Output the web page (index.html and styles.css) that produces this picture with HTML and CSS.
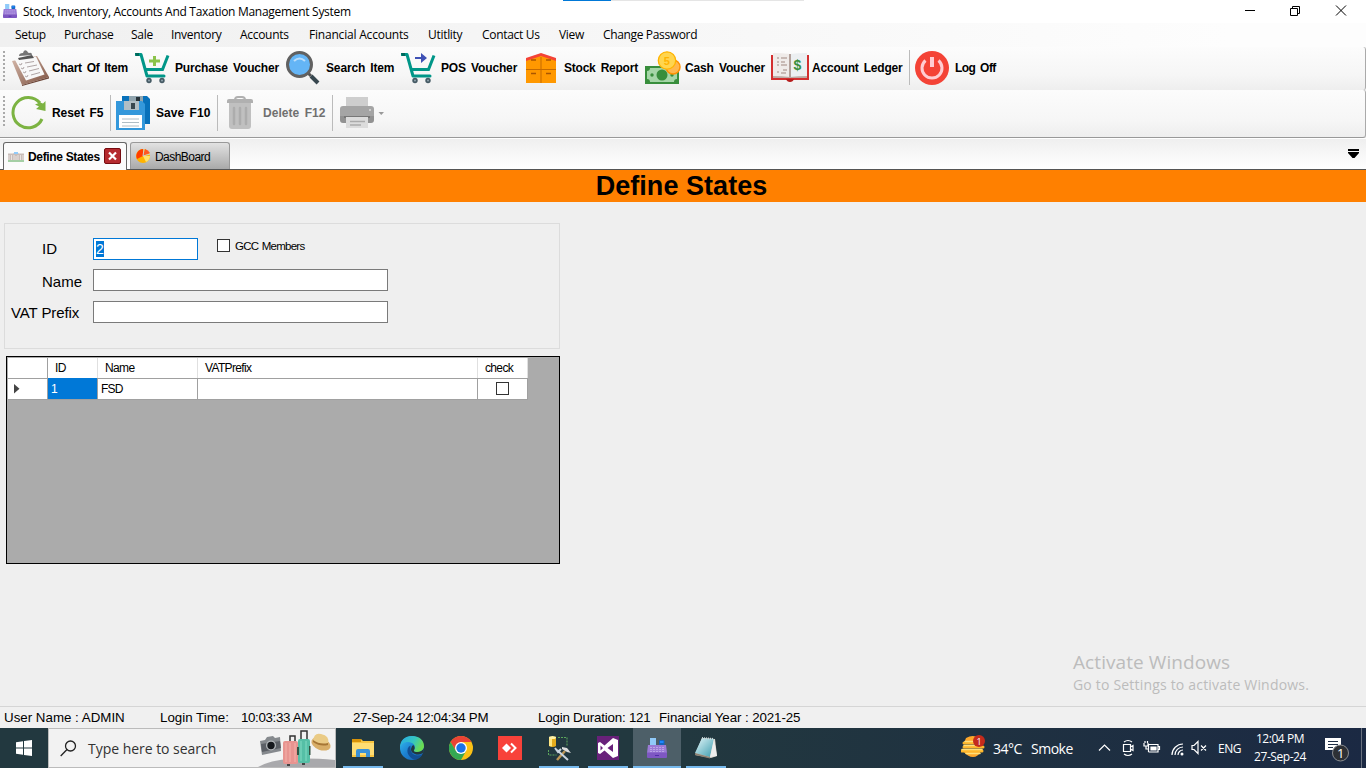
FILE: index.html
```html
<!DOCTYPE html>
<html lang="en">
<head>
<meta charset="utf-8">
<title>Stock, Inventory, Accounts And Taxation Management System</title>
<link rel="stylesheet" href="styles.css">
</head>
<body>
<svg class="defs" width="0" height="0">
  <defs>
    <linearGradient id="edgeBlue" x1="0" y1="0" x2="1" y2="1"><stop offset="0" stop-color="#35c1f1"/><stop offset=".5" stop-color="#1c7fd0"/><stop offset="1" stop-color="#1660b0"/></linearGradient>
    <linearGradient id="edgeGreen" x1="0" y1="0" x2="1" y2=".4"><stop offset="0" stop-color="#27a9e8"/><stop offset=".6" stop-color="#36c6c0"/><stop offset="1" stop-color="#6bdc52"/></linearGradient>
    <linearGradient id="wood" x1="0" y1="0" x2="1" y2="1"><stop offset="0" stop-color="#d8bcae"/><stop offset="1" stop-color="#7d5140"/></linearGradient>
    <linearGradient id="glass" x1="0" y1="0" x2="1" y2="1"><stop offset="0" stop-color="#e4f7fa"/><stop offset="1" stop-color="#3c9cae"/></linearGradient>
    <symbol id="register" viewBox="0 0 20 20">
      <rect x="3" y="0" width="6" height="8" fill="#90caf9"/><rect x="12" y="2" width="5.500" height="5" rx="1" fill="#1565c0"/><path d="M13 3h3.500v2H13z" fill="#1e88ff"/>
      <path d="M1 7h18l1 8H0z" fill="#9b7bd6"/><path d="M0 14.500h20V19q0 1-1 1H1q-1 0-1-1z" fill="#7e57c2"/>
      <path d="M3 9.500h14M3 11.500h14M3 13.500h14" stroke="#c3aeea" stroke-width=".800" stroke-dasharray="2 1"/><path d="M8 17.500h4" stroke="#512da8"/>
    </symbol>
    <symbol id="cart" viewBox="0 0 36 34">
      <path d="M1 3.500h5L12 25h17" fill="none" stroke="#009688" stroke-width="3" stroke-linecap="round" stroke-linejoin="round"/>
      <path d="M9 18.500h18.500L33 4.500" fill="none" stroke="#009688" stroke-width="3"/><path d="M0 2h4v3H1z" fill="#00695c"/>
      <circle cx="14" cy="29.500" r="2.700" fill="#455a64"/><circle cx="27" cy="29.500" r="2.700" fill="#455a64"/><circle cx="14" cy="29.500" r="1" fill="#90a4ae"/><circle cx="27" cy="29.500" r="1" fill="#90a4ae"/>
    </symbol>
  </defs>
</svg>
<div class="window">
  <header class="titlebar">
    <svg class="app-icon" viewBox="0 0 20 20"><use href="#register"/></svg>
    <span class="title-text">Stock, Inventory, Accounts And Taxation Management System</span>
    <div class="loading"></div>
    <svg class="win-controls" viewBox="0 0 104 12" fill="none" stroke="#000"><path d="M0 5.500h10"/><path d="M45.500 3.500h7v7h-7zM47.500 3.500v-2h7v7h-2"/><path d="M91 .500l10 10M101 .500l-10 10"/></svg>
  </header>
  <nav class="menu">
    <span class="m-setup">Setup</span><span class="m-purchase">Purchase</span><span class="m-sale">Sale</span><span class="m-inventory">Inventory</span><span class="m-accounts">Accounts</span><span class="m-financial">Financial Accounts</span><span class="m-utility">Utitlity</span><span class="m-contact">Contact Us</span><span class="m-view">View</span><span class="m-password">Change Password</span>
  </nav>
  <div class="toolbar primary">
    <i class="grip"></i>
    <div class="tool t-chart">
      <svg width="37" height="36" viewBox="0 0 37 36"><path d="M0 11 25 6l12 21-27 8z" fill="url(#wood)"/><path d="M10 35l27-8v1.500L10 36z" fill="#6d4638"/><path d="M3 10 24 6.500l8.500 18L14 30.500z" fill="#f8f8f8"/><path d="M7 6q0-3 4-3 1-4 4-2 1 2 2 2 3-1 3 2z" fill="#757575"/><path d="M6 8l14-3 2 3-15 2z" fill="#555"/><path d="M7 14l2 1 1-2M13 13l9-1.500M9 18l2 1 1-2M15 17l10-2M11 22l2 1 1-2M17 21l10-2.500M13 26l2 1 1-2M19 25l9-2.500" fill="none" stroke="#b0a6a6"/></svg>
      <span>Chart Of Item</span>
    </div>
    <div class="tool t-purchase"><svg width="36" height="34"><use href="#cart"/><path d="M18 5h3v3.500h4v3h-4V15h-3v-3.500h-4v-3h4z" fill="#8bc34a"/></svg><span>Purchase Voucher</span></div>
    <div class="tool t-search"><svg width="34" height="34" viewBox="0 0 34 34"><path d="M22 22l3 3" stroke="#555" stroke-width="3"/><path d="M25 25l7 7" stroke="#37474f" stroke-width="4"/><circle cx="13.500" cy="13.500" r="12" fill="#64b5f6" stroke="#616161" stroke-width="3"/><path d="M8 10q5.500-5 11 0" fill="none" stroke="#bbdefb" stroke-width="2"/></svg><span>Search Item</span></div>
    <div class="tool t-pos"><svg width="36" height="34"><use href="#cart"/><path d="M14 6h6V2l6 5-6 5V8h-6z" fill="#3f51b5"/></svg><span>POS Voucher</span></div>
    <div class="tool t-stock"><svg width="30" height="30" viewBox="0 0 30 30"><path d="M0 6 15 1l15 5v24H0z" fill="#ff9800"/><path d="M0 8V5L15 0l15 5v3L15 3z" fill="#f44336"/><path d="M14.500 4h1v26h-1zM0 16h30v1H0z" fill="#c66b00"/><path d="M5 7h5M20 7h5M5 20.500h5M20 20.500h5" stroke="#aa5600" stroke-width="1.500"/></svg><span>Stock Report</span></div>
    <div class="tool t-cash"><svg width="36" height="34" viewBox="0 0 36 34"><path d="M0 15h34v18H0z" fill="#388e3c"/><path d="M2 20q3 0 3-3h24q0 3 3 3v8q-3 0-3 3H5q0-3-3-3z" fill="#a5d6a7"/><circle cx="17" cy="24" r="5.500" fill="#388e3c"/><circle cx="7" cy="24" r="1.700" fill="#388e3c"/><circle cx="27" cy="24" r="1.700" fill="#388e3c"/><circle cx="28" cy="16" r="7" fill="#ffb74d" stroke="#ff9100" stroke-width="1.500"/><circle cx="22" cy="9.500" r="8.700" fill="#ffd54f" stroke="#ffb300" stroke-width="1.300"/><text x="18.800" y="13.500" class="coin">5</text></svg><span>Cash Voucher</span></div>
    <div class="tool t-ledger"><svg width="38" height="30" viewBox="0 0 38 30"><path d="M0 2h38v25H0z" fill="#d32f2f"/><path d="M15 26h8q-1 3-4 3t-4-3z" fill="#b71c1c"/><path d="M2 23h34v2H2z" fill="#bcaaa4"/><path d="M2 0q9 0 17 1v23q-8-1-17-1z" fill="#efebe9"/><path d="M36 0q-9 0-17 1v23q8-1 17-1z" fill="#eceff1"/><path d="M19 1v23" stroke="#a1887f" stroke-width="1.500"/><path d="M6 5h2M10 5h6M6 9h2M10 9h4M6 12h2M10 12h6M6 19h2M12 17h4M10 20h5" stroke="#bcaaa4" stroke-width="1.500"/><text x="22.500" y="17" class="dollar">$</text></svg><span>Account Ledger</span></div>
    <i class="sep"></i>
    <div class="tool t-log"><svg width="34" height="34" viewBox="0 0 34 34"><circle cx="17" cy="17" r="17" fill="#f44336"/><path d="M10.500 9.500a10 10 0 1 0 13 0" fill="none" stroke="#ffcdd2" stroke-width="3"/><path d="M15 6h4v10h-4z" fill="#ffcdd2"/></svg><span>Log Off</span></div>
  </div>
  <div class="toolbar secondary">
    <i class="grip"></i>
    <div class="tool t-reset"><svg width="36" height="36" viewBox="0 0 36 36"><path d="M31 24A15.200 15.200 0 1 1 29 8" fill="none" stroke="#7cb342" stroke-width="3"/><path d="M34.500 6v10l-9.500-2 3-2.500-4-2 5-2 3 1z" fill="#7cb342"/></svg><span>Reset F5</span></div>
    <i class="sep"></i>
    <div class="tool t-save"><svg width="34" height="36" viewBox="0 0 34 36"><path d="M6 1h25l3 3v25H6z" fill="#0871ba"/><path d="M13 1h14v8H13z" fill="#90a4ae"/><path d="M20 2h4v5h-4z" fill="#263238"/><path d="M0 6h26l3 3v26H0z" fill="#3498db"/><path d="M8 6h15v9H8z" fill="#b0bec5"/><path d="M15 8h4v6h-4z" fill="#37474f"/><path d="M3 20h23v13H3z" fill="#fff"/><path d="M6 24h17M6 27.500h17M6 31h17" stroke="#b0bec5"/></svg><span>Save F10</span></div>
    <i class="sep"></i>
    <div class="tool t-delete"><svg width="26" height="34" viewBox="0 0 26 34"><path d="M7 4q0-4 4-4h4q4 0 4 4h-2q0-2-2-2h-4q-2 0-2 2z" fill="#b0b0b0"/><path d="M0 4.500Q0 3 2 3h22q2 0 2 1.500V7H0z" fill="#b0b0b0"/><path d="M2 7h22v23q0 3-3 3H5q-3 0-3-3z" fill="#c0c0c0"/><path d="M7 12v16M13 12v16M19 12v16" stroke="#adadad" stroke-width="2.500" stroke-linecap="round"/></svg><span>Delete F12</span></div>
    <i class="sep"></i>
    <div class="tool t-print"><svg width="45" height="34" viewBox="0 0 45 34"><path d="M6 1h22v12H6z" fill="#cecece"/><path d="M0 13q0-3 3-3h28q3 0 3 3v8H0z" fill="#a5a5a5"/><path d="M0 20h34v4q0 3-3 3H3q-3 0-3-3z" fill="#929292"/><path d="M4 20h26v2H4z" fill="#777"/><path d="M6 21h22v11H6z" fill="#dcdcdc"/><path d="M10 25.500h15M10 29h11" stroke="#aaa" stroke-width="1.500"/><circle cx="30" cy="14" r="1" fill="#ddd"/><path d="M38.500 16h5.500l-2.750 3z" fill="#999"/></svg></div>
  </div>
  <div class="tabs">
    <div class="tab active"><svg width="16" height="11" viewBox="0 0 16 11"><path d="M0 9h16v2H0z" fill="#a5cfa5"/><path d="M0 2.500h5L8 1l3 1.500h5V9H0z" fill="#c9bdb9"/><path d="M6 1h4v2H6z" fill="#90caf9"/><path d="M1 4v5M3.500 4v5M6 4v5M8 5v4M10 4v5M12.500 4v5M15 4v5" stroke="#e9e3e1"/></svg><b>Define States</b><svg width="17" height="16" viewBox="0 0 17 16"><rect x=".500" y=".500" width="16" height="15" rx="1.500" fill="#b52a2e" stroke="#760c10"/><path d="M5 4.500l7 7M12 4.500l-7 7" stroke="#fff" stroke-width="2.200"/></svg></div>
    <div class="tab inactive"><svg width="14" height="14" viewBox="0 0 14 14"><circle cx="7" cy="7" r="7" fill="#ffb300"/><path d="M7 7h7a7 7 0 0 1-4 6z" fill="#ffe36a"/><path d="M7 7V0a7 7 0 0 0-6 10z" fill="#ff3d00"/><path d="M7 7l2-7q3 1 5 4z" fill="#ff5722"/><path d="M7 7l1-7M7 7l7-2" stroke="#ccc"/></svg><span>DashBoard</span></div>
    <svg class="tab-menu" width="11" height="9" viewBox="0 0 11 9"><path d="M0 0h11v2H0zM0 3h11v1L6.500 9h-2L0 4z"/></svg>
  </div>
  <h1 class="heading">Define States</h1>
  <main class="content">
    <section class="form">
      <div class="row r-id"><label>ID</label><div class="input short"><mark>2</mark></div><i class="box"></i><span class="gcc">GCC Members</span></div>
      <div class="row r-name"><label>Name</label><div class="input"></div></div>
      <div class="row r-vat"><label>VAT Prefix</label><div class="input"></div></div>
    </section>
    <section class="datagrid">
      <div class="grid head"><span></span><span>ID</span><span>Name</span><span>VATPrefix</span><span>check</span></div>
      <div class="grid record"><span><svg width="6" height="10"><path d="M0 0l5.500 4.800L0 9.600z" fill="#444"/></svg></span><span class="selected">1</span><span>FSD</span><span></span><span><i class="box"></i></span></div>
    </section>
    <aside class="activation"><p>Activate Windows</p><small>Go to Settings to activate Windows.</small></aside>
  </main>
  <footer class="status"><span class="s-user">User Name : ADMIN</span><span class="s-login">Login Time:</span><span class="s-time">10:03:33 AM</span><span class="s-now">27-Sep-24 12:04:34 PM</span><span class="s-duration">Login Duration: 121</span><span class="s-year">Financial Year : 2021-25</span></footer>
</div>
<div class="taskbar">
  <div class="start"><svg width="16" height="16" viewBox="0 0 16 16" fill="#fff"><path d="M0 2.300 7 1.200v6.400H0zM8 1.100 16 0v7.600H8zM0 8.400h7v6.400l-7-1zM8 8.400h8V16l-8-1.100z"/></svg></div>
  <div class="search">
    <svg width="17" height="17" viewBox="0 0 17 17" fill="none" stroke="#222" stroke-width="1.300"><circle cx="10.500" cy="6" r="5"/><path d="M7 9.500.700 16"/></svg>
    <span>Type here to search</span>
    <svg class="travel" width="77" height="38" viewBox="0 0 77 38">
      <path d="M0 38q20-12 77-7v7z" fill="#a9a9ac"/><path d="M2 12l5-1 2-3 6-1 2 2 5-1 1 14-19 4z" fill="#85898d"/><path d="M3 15l19-3 1 7-19 4z" fill="#5c6066"/><circle cx="13" cy="16.500" r="5" fill="#b4b8bb"/><circle cx="13" cy="16.500" r="3.700" fill="#16191d"/>
      <path d="M32 12V7h5v6M43 10V2h6v9" fill="none" stroke="#333" stroke-width="1.500"/><rect x="40" y="10" width="12" height="24" rx="2" fill="#55bfa6"/><rect x="25" y="12" width="15" height="23" rx="2" fill="#e89490"/><path d="M28 14v19M32 14v19M37 14v19" stroke="#f4b2aa"/><path d="M43 12v20M48 12v20" stroke="#83dbc3"/><path d="M39 18h2v8h-2zM51 17h1.500v9H51z" fill="#354"/><path d="M29 35h3v2h-3zM44 34h3v2h-3z" fill="#444"/>
      <ellipse cx="63" cy="15" rx="10" ry="6" transform="rotate(20 63 15)" fill="#d8ae68"/><path d="M55 12q1-9 8-7 9 2 7 9-7 4-15-2z" fill="#eacb86"/><path d="M55 11q7 5 15 3v2q-8 2-15-3z" fill="#a67635"/>
    </svg>
  </div>
  <div class="apps">
    <div class="app open"><svg width="22" height="20" viewBox="0 0 22 20"><path d="M0 1h9l2 2h11v16H0z" fill="#f9c541"/><path d="M0 1h9v3H0z" fill="#d99309"/><path d="M0 5h22v12H0z" fill="#ffdd73"/><path d="M4 19v-6q0-2 2-2h10q2 0 2 2v6h-4v-4H8v4z" fill="#3a91d7"/></svg></div>
    <div class="app"><svg width="24" height="24" viewBox="0 0 24 24"><circle cx="12" cy="12" r="12" fill="url(#edgeBlue)"/><path d="M0 12C0 4 5 0 12 0c7 0 12 4 12 10 0 4-3 6-7 6-3 0-4-1-3-2 3-4-1-8-6-8-4 0-7 2-8 6z" fill="url(#edgeGreen)"/><path d="M10.500 9.500C5 12 7 22 15 23.700c4-.700 6-2.700 7.500-5.200-6 2.500-13 .500-12-9z" fill="#124f94"/><path d="M12 10q-3 6 3 8 5 1.500 8.500-1.500L24 12q-2 4-7 4-4 0-3-2 1.500-2-.500-5z" fill="#22383f"/></svg></div>
    <div class="app"><svg width="24" height="24" viewBox="0 0 24 24"><circle cx="12" cy="12" r="12" fill="#fbc116"/><path d="M1.600 6A12 12 0 0 1 22.400 6H12l-5 9z" fill="#ea4335"/><path d="M1.600 6A12 12 0 0 0 12 24l5-9H7z" fill="#34a853"/><circle cx="12" cy="12" r="6" fill="#fff"/><circle cx="12" cy="12" r="4.700" fill="#1a73e8"/></svg></div>
    <div class="app"><svg width="24" height="24" viewBox="0 0 24 24"><path d="M0 0h24v24H0z" fill="#f8423a"/><path d="M4 12l4.500-4.500L13 12l-4.500 4.500z" fill="#fff"/><path d="M13 7.500l4.500 4.500-4.500 4.500" stroke="#fff" fill="none" stroke-width="2"/></svg></div>
    <div class="app open"><svg width="24" height="25" viewBox="0 0 24 25"><path d="M2 1h7v9q-3 2-7 0z" fill="#e5ac1c"/><path d="M2 1h3v9.500L2 10z" fill="#ffe783"/><ellipse cx="5.500" cy="1.500" rx="3.500" ry="1.500" fill="#fff0a3"/><path d="M11 1.500h9v9M1.500 14v5h8" fill="none" stroke="#5ca65c" stroke-dasharray="2 1"/><path d="M10 24l8-9" stroke="#bd9655" stroke-width="2.500"/><path d="M15 11l5 1 4 5-4-1-5-3z" fill="#ddd"/><path d="M10 14l11 10M8 12l3 4 3-3" stroke="#cad5df" stroke-width="2" fill="none"/></svg></div>
    <div class="app open"><svg width="22" height="24" viewBox="0 0 22 24"><path d="M0 0h22v24H0z" fill="#68217a"/><path fill-rule="evenodd" d="M16 2l5 2v16l-5 2-8.500-7.500L3 18l-2-1V7l2-1 4.500 3.500zM16 8l-5.500 4 5.500 4zM3.500 9.500v5L6 12z" fill="#fff"/></svg></div>
    <div class="app open current"><svg width="20" height="20"><use href="#register"/></svg></div>
    <div class="app open"><svg width="24" height="22" viewBox="0 0 24 22"><path d="M8 1l13 1 2 17-6 2L1 18z" fill="#d9d2c8"/><path d="M8 1l12 1-4 18-15-4z" fill="url(#glass)"/><path d="M20 2l3 17-7 1z" fill="#eee"/><path d="M1 16l15 4v1.500L1 18z" fill="#8d8172"/><path d="M8 1l12 1" stroke="#c9d4d6" stroke-width="2" stroke-dasharray="1 1"/></svg></div>
  </div>
  <div class="tray">
    <div class="weather"><svg width="25" height="23" viewBox="0 0 25 23"><path d="M5 3q7-4 13 0l3 5H3zM2 16h18q-3 6-8 6t-10-6z" fill="#ffa82b"/><path d="M3 8h17M3 12h19M1 16h20" stroke="#ffb72b" stroke-width="3" stroke-linecap="round"/><path d="M4 6.500h14M3 10.500h17M1 14.500h20M5 18.500h14" stroke="#ffe07a" stroke-width="1.500" stroke-linecap="round"/><circle cx="18" cy="6" r="6" fill="#c42b1c"/><text x="15.500" y="9.500" class="badge-text">1</text></svg></div>
    <span class="temp">34°C</span><span class="smoke">Smoke</span>
    <svg class="tray-icons" width="112" height="18" viewBox="0 0 112 18" fill="none" stroke="#fff" stroke-width="1.200"><path d="M1 11.500 6.500 6 12 11.500"/><path d="M26 3q4-3 8 0M26 15q4 3 8 0M25.500 5.500h7v7h-7zM32.500 8l2.500-1.500v5L32.500 10"/><path d="M50.500 13V5.500H60v7.500h-9.500M60.500 7.500h1v3h-1M46 4v3h4V4M47 2v2M49.500 2v2M48 7v3h2"/><path d="M53 8h5v3h-5z" fill="#fff"/><path d="M74 16A11 11 0 0 1 85 5M77 16A8 8 0 0 1 85 8M80 16a5 5 0 0 1 5-5"/><circle cx="84" cy="15" r="1.500" fill="#fff" stroke="none"/><path d="M94 6.500h2l4-4v12l-4-4h-2zM103 6.500l5 5M108 6.500l-5 5"/></svg>
    <span class="lang">ENG</span><div class="clock"><span class="hour">12:04 PM</span><span class="date">27-Sep-24</span></div>
    <svg class="notice" width="26" height="26" viewBox="0 0 26 26"><path d="M0 1h16v12h-3v3l-3-3H0z" fill="#fff"/><path d="M3 4.500h10M3 7.500h10M3 10.500h5" stroke="#203047"/><circle cx="15.500" cy="16" r="8" fill="#2d3035" stroke="#8a8d91"/><text x="12" y="20.500" class="notice-text">1</text></svg>
    <i class="peek"></i>
  </div>
</div>
</body>
</html>
```
FILE: styles.css
```css
* { box-sizing: border-box; }
body { margin: 0; width: 1366px; height: 768px; overflow: hidden; font-family: "Liberation Sans", sans-serif; color: #000; background: #efefef; }
.defs { position: absolute; }
svg { display: block; flex: none; }
span, b { white-space: nowrap; }
.window { height: 728px; display: flex; flex-direction: column; }

.titlebar { height: 23px; background: #fff; display: flex; align-items: flex-start; padding-left: 3px; font: 12px/23px "Open Sans", sans-serif; }
.app-icon { width: 14px; height: 14px; margin: 4px 6px 0 0; }
.title-text { width: 540px; letter-spacing: -.29px; }
.loading { width: 241px; height: 1px; background: linear-gradient(90deg, #0078d7 48px, #e5e5e5 48px); }
.win-controls { width: 104px; height: 12px; margin: 5px 0 0 441px; }

.menu { height: 24px; padding-left: 15px; display: flex; background: linear-gradient(90deg, #f0f0f0, #fdfdfd 90%); font: 12px/24px "Open Sans", sans-serif; letter-spacing: -.3px; }
.m-setup { width: 49px; } .m-purchase { width: 67px; } .m-sale { width: 40px; }
.m-inventory, .m-accounts { width: 69px; } .m-financial { width: 119px; letter-spacing: -.2px; }
.m-utility { width: 54px; } .m-contact { width: 77px; } .m-view { width: 44px; }
.m-password { letter-spacing: -.35px; }

.toolbar { display: flex; align-items: flex-start; border-right: 1px solid #aaa; border-radius: 0 3px 3px 0; background: linear-gradient(#fcfcfc, #f6f6f6 65%, #eee); font-weight: bold; font-size: 12px; line-height: 14px; }
.primary { height: 43px; padding-top: 3px; }
.secondary { height: 48px; padding-top: 5px; border-bottom: 1px solid #999; }
.grip { width: 2px; height: 32px; margin: 1px 6px 0 3px; background: repeating-linear-gradient(#aaa 0 2px, transparent 2px 4px); }
.tool { display: flex; align-items: center; height: 36px; letter-spacing: -.15px; word-spacing: 2px; }
.t-chart { width: 123px; gap: 3px; margin-left: 1px; letter-spacing: -.33px; }
.t-purchase { width: 151px; gap: 4px; }
.t-search { width: 115px; gap: 6px; }
.t-pos { width: 125px; gap: 4px; }
.t-stock { width: 119px; gap: 8px; letter-spacing: -.23px; }
.t-cash { width: 126px; gap: 4px; }
.t-ledger { width: 138px; gap: 3px; letter-spacing: -.2px; }
.t-log { gap: 6px; margin-left: 5px; letter-spacing: -.55px; }
.sep { width: 1px; height: 35px; background: #bbb; }
.secondary .sep { height: 36px; }
.secondary .tool { letter-spacing: .05px; }
.secondary .t-reset { width: 98px; gap: 4px; margin-left: 1px; letter-spacing: -.07px; }
.t-reset svg { margin-left: -1px; margin-right: 1px; }
.t-save { width: 106px; padding-left: 5px; gap: 6px; }
.t-delete { width: 114px; padding-left: 9px; gap: 10px; color: #707070; }
.t-print { padding-left: 7px; }
.coin { font: bold 11px "Liberation Sans", sans-serif; fill: #ffb300; letter-spacing: 0; }
.dollar { font: bold 14px "Liberation Sans", sans-serif; fill: #388e3c; }

.tabs { height: 32px; display: flex; align-items: flex-end; padding-left: 3px; border-top: 1px solid #fff; border-bottom: 1px solid #555; background: linear-gradient(#efefef, #fff); font-size: 12px; }
.tab { height: 27px; display: flex; align-items: center; border: 1px solid #666; border-bottom: 0; border-radius: 3px 3px 0 0; }
.active { width: 124px; padding: 0 0 1px 4px; gap: 4px; background: #fbfbfb; margin-bottom: -1px; height: 28px; }
.active b { width: 72px; padding-top: 2px; letter-spacing: -.33px; }
.inactive { width: 100px; margin-left: 3px; padding: 2px 0 0 5px; gap: 5px; background: linear-gradient(#e2e2e2, #a9a9a9); border-color: #999; letter-spacing: -.55px; }
.inactive svg { margin-top: -2px; }
.tab-menu { margin: 0 0 11px 1118px; }
.heading { height: 32px; margin: 0; padding-right: 3px; background: #ff8000; text-align: center; font-size: 27px; line-height: 32px; letter-spacing: .05px; }

.content { flex: 1; padding: 21px 0 0 4px; background: #efefef; }
.form { width: 556px; height: 126px; padding-top: 14px; border: 1px solid #dcdcdc; }
.row { display: flex; align-items: flex-start; font-size: 15px; line-height: 22px; padding-left: 37px; height: 31px; }
.row label { width: 51px; }
.r-name { height: 32px; } .r-name label { padding-top: 2px; }
.r-vat { padding-left: 6px; } .r-vat label { width: 82px; padding-top: 1px; letter-spacing: -.1px; }
.input { width: 295px; height: 22px; border: 1px solid #7a7a7a; background: #fff; }
.short { width: 105px; border-color: #0078d7; padding: 2px; }
.input mark { display: block; width: 8px; height: 16px; font-size: 14px; line-height: 16px; background: #0078d7; color: #fff; }
.box { display: block; width: 13px; height: 13px; border: 1px solid #333; background: #fff; }
.row .box { margin: 1px 0 0 19px; }
.gcc { margin-left: 5px; font-size: 11.500px; line-height: 16px; letter-spacing: -.75px; word-spacing: 1px; }

.datagrid { width: 554px; height: 208px; margin: 7px 0 0 2px; border: 1px solid #000; background: #ababab; padding: 1px 0 0 1px; font-size: 12px; letter-spacing: -.75px; }
.grid { display: grid; grid-template-columns: 40px 50px 100px 280px 50px; width: 520px; background: #fff; }
.grid span { border-right: 1px solid #a0a0a0; border-bottom: 1px solid #a0a0a0; }
.head { height: 20px; line-height: 20px; }
.head span { padding-left: 7px; border-right-color: #e0e0e0; letter-spacing: -.65px; }
.head span:first-child { border-right-color: #a0a0a0; }
.record { height: 22px; }
.record span { padding: 1px 0 0 3px; line-height: 20px; }
.record span:first-child { padding: 6px 0 0 6px; }
.record .selected { background: #0078d7; color: #fff; }
.record span:last-child { padding: 4px 0 0 18px; }
.activation { width: 260px; margin: 85px 0 0 1069px; color: #bcbcbc; font-family: "Open Sans", sans-serif; }
.activation p { margin: 0; font-size: 19px; line-height: 27px; letter-spacing: .08px; }
.activation small { display: block; margin-top: -1px; font-size: 14px; line-height: 19px; letter-spacing: .19px; white-space: nowrap; }

.status { height: 22px; display: flex; padding-left: 4px; border-top: 1px solid #d5d5d5; background: #f0f0f0; font-size: 13.330px; line-height: 21px; }
.s-user { width: 156px; } .s-login { width: 81px; } .s-time { width: 112px; letter-spacing: -.35px; }
.s-now { width: 185px; letter-spacing: -.3px; } .s-duration { width: 121px; letter-spacing: -.2px; }
.s-year { letter-spacing: -.1px; }

.taskbar { height: 40px; display: flex; background: linear-gradient(90deg, #22383f 0 50%, #1b2943); color: #fff; font-family: "Open Sans", sans-serif; }
.start { width: 48px; padding: 12px 0 0 16px; }
.search { width: 288px; display: flex; align-items: center; padding-left: 11px; background: #f2f2f2; border: 1px solid #bbb; color: #333; font-size: 14px; }
.search span { width: 171px; margin-left: 11px; letter-spacing: -.03px; }
.travel { margin-left: auto; }
.apps { display: flex; gap: 1px; margin-left: 3px; }
.app { width: 48px; height: 40px; display: flex; align-items: center; justify-content: center; }
.open { background: linear-gradient(#76b9ed, #76b9ed) 4px 38px / 40px 2px no-repeat; }
.current { background: linear-gradient(#76b9ed, #76b9ed) 0 38px / 48px 2px no-repeat #4d5f68; }
.tray { display: flex; align-items: center; margin-left: 231px; }
.weather { width: 32px; padding-bottom: 4px; }
.temp { width: 38px; font-size: 14px; letter-spacing: -.5px; }
.smoke { width: 67px; font-size: 14px; letter-spacing: -.5px; }
.lang { width: 32px; margin-left: 8px; font-size: 12px; letter-spacing: -.45px; }
.clock { width: 60px; display: flex; flex-direction: column; align-items: center; font-size: 12px; line-height: 18px; letter-spacing: -.45px; }
.notice { margin: 4px 0 0 15px; }
.peek { width: 1px; height: 40px; margin-left: 10px; background: #69717f; }
.badge-text, .notice-text { fill: #fff; stroke: none; font: 9px "Open Sans", sans-serif; }
.notice-text { font-size: 13px; }
```
